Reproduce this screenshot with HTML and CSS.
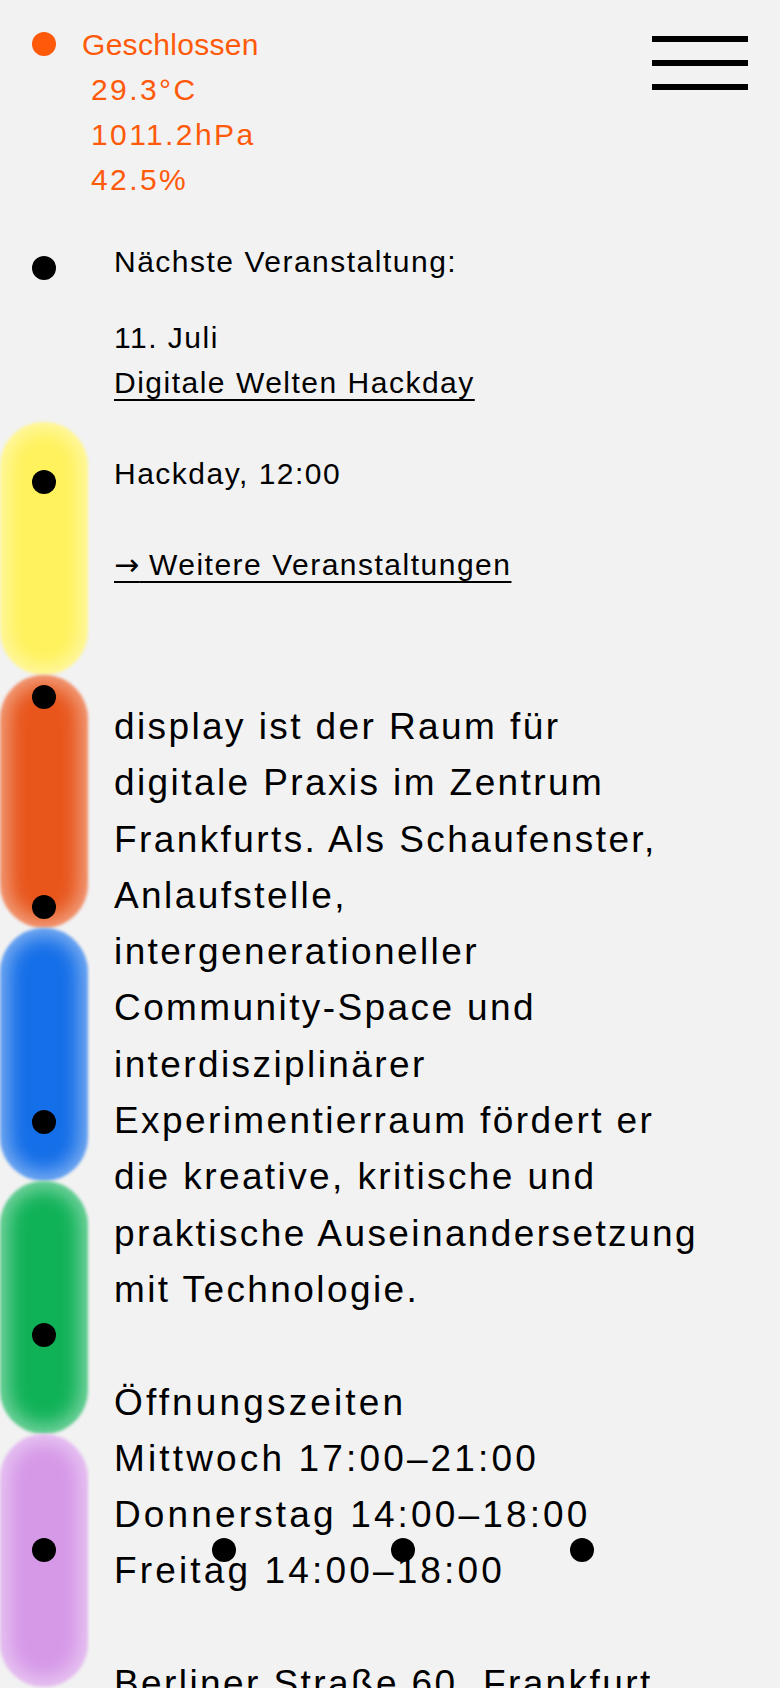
FILE: index.html
```html
<!DOCTYPE html>
<html lang="de">
<head>
<meta charset="utf-8">
<title>display</title>
<link rel="stylesheet" href="styles.css">
</head>
<body>
<div class="page">
  <header class="top">
    <div class="status">
      <span class="status-dot"></span>
      <div class="status-text">
        <div>Geschlossen</div>
        <div class="reading">29.3°C</div>
        <div class="reading">1011.2hPa</div>
        <div class="reading">42.5%</div>
      </div>
    </div>
    <button class="menu" aria-label="Menü">
      <span class="bar"></span>
      <span class="bar"></span>
      <span class="bar"></span>
    </button>
  </header>

  <aside class="rail">
    <div class="pill yellow"></div>
    <div class="pill orange"></div>
    <div class="pill blue"></div>
    <div class="pill green"></div>
    <div class="pill purple"></div>
  </aside>

  <main class="content">
    <section class="event">
      <p class="label">Nächste Veranstaltung:</p>
      <p class="date">11. Juli<br><a href="#">Digitale Welten Hackday</a></p>
      <p class="time">Hackday, 12:00</p>
      <p class="more"><a href="#"><span class="arrow">→</span> Weitere Veranstaltungen</a></p>
    </section>

    <section class="about">
      <p>display ist der Raum für<br>digitale Praxis im Zentrum<br>Frankfurts. Als Schaufenster,<br>Anlaufstelle,<br>intergenerationeller<br>Community-Space und<br>interdisziplinärer<br>Experimentierraum fördert er<br>die kreative, kritische und<br>praktische Auseinandersetzung<br>mit Technologie.</p>
      <p class="gap hours">Öffnungszeiten<br>Mittwoch 17:00–21:00<br>Donnerstag 14:00–18:00<br>Freitag 14:00–18:00</p>
      <p class="gap">Berliner Straße 60, Frankfurt</p>
    </section>
  </main>

  <span class="dot d1"></span>
  <span class="dot d2"></span>
  <span class="dot d3"></span>
  <span class="dot d4"></span>
  <span class="dot d5"></span>
  <span class="dot d6"></span>
  <span class="dot d7"></span>
  <span class="dot d8"></span>
  <span class="dot d9"></span>
  <span class="dot d10"></span>
</div>
</body>
</html>
```

FILE: styles.css
```css
html, body {
  margin: 0;
  padding: 0;
  background: #f2f2f2;
}

body {
  font-family: "Liberation Sans", Arial, sans-serif;
  color: #000;
  overflow: hidden;
}

.page {
  position: relative;
  width: 780px;
  min-height: 1688px;
  display: grid;
  grid-template-columns: 114px 1fr;
  grid-template-rows: auto 1fr;
}

/* header */
.top {
  grid-column: 1 / -1;
  grid-row: 1;
  display: flex;
  justify-content: space-between;
  align-items: flex-start;
  padding: 22px 32px 0 32px;
}

.status {
  display: flex;
  align-items: flex-start;
  gap: 26px;
  color: #ff5a0a;
  font-size: 30px;
  line-height: 45px;
  letter-spacing: 0.01em;
}

.status-dot {
  width: 24px;
  height: 24px;
  border-radius: 50%;
  background: #ff5a0a;
  margin-top: 10px;
  flex: none;
}

.reading {
  padding-left: 9px;
  letter-spacing: 0.08em;
}

.menu {
  margin: 14px 0 0 0;
  padding: 0;
  border: 0;
  background: none;
  width: 96px;
  display: flex;
  flex-direction: column;
  gap: 18px;
}

.bar {
  display: block;
  height: 6px;
  background: #000;
}

/* left rail of pills */
.rail {
  grid-column: 1;
  grid-row: 2;
  padding-top: 220px;
  display: flex;
  flex-direction: column;
}

.pill {
  width: 88px;
  height: 253px;
  border-radius: 44px;
  flex: none;
  box-shadow: inset 0 0 18px 9px rgba(255, 255, 255, 0.42);
  filter: blur(1.5px);
}

.yellow { background: #fff25c; }
.orange { background: #e8561c; }
.blue   { background: #156fe8; }
.green  { background: #10b258; }
.purple { background: #d699e8; }

/* content */
.content {
  grid-column: 2;
  grid-row: 2;
  padding: 37px 40px 0 0;
}

.event {
  font-size: 30px;
  line-height: 45px;
  letter-spacing: 0.05em;
}

.event p {
  margin: 0;
}

.event .date {
  margin-top: 31px;
}

.event .time,
.event .more {
  margin-top: 46px;
}

.arrow {
  font-family: "DejaVu Sans", sans-serif;
  letter-spacing: 0;
}

a {
  color: #000;
  text-decoration: underline;
  text-decoration-thickness: 2px;
  text-underline-offset: 6px;
}

.about {
  margin-top: 112px;
  font-size: 37px;
  line-height: 56.3px;
  letter-spacing: 0.065em;
  white-space: nowrap;
}

.about p {
  margin: 0;
}

.about .gap {
  margin-top: 56.3px;
}

.about .hours {
  letter-spacing: 0.085em;
}

/* dot canvas */
.dot {
  position: absolute;
  width: 24px;
  height: 24px;
  border-radius: 50%;
  background: #000;
}

.d1  { left: 32px;  top: 256px; }
.d2  { left: 32px;  top: 470px; }
.d3  { left: 32px;  top: 685px; }
.d4  { left: 32px;  top: 895px; }
.d5  { left: 32px;  top: 1110px; }
.d6  { left: 32px;  top: 1323px; }
.d7  { left: 32px;  top: 1538px; }
.d8  { left: 212px; top: 1538px; }
.d9  { left: 391px; top: 1538px; }
.d10 { left: 570px; top: 1538px; }
```
